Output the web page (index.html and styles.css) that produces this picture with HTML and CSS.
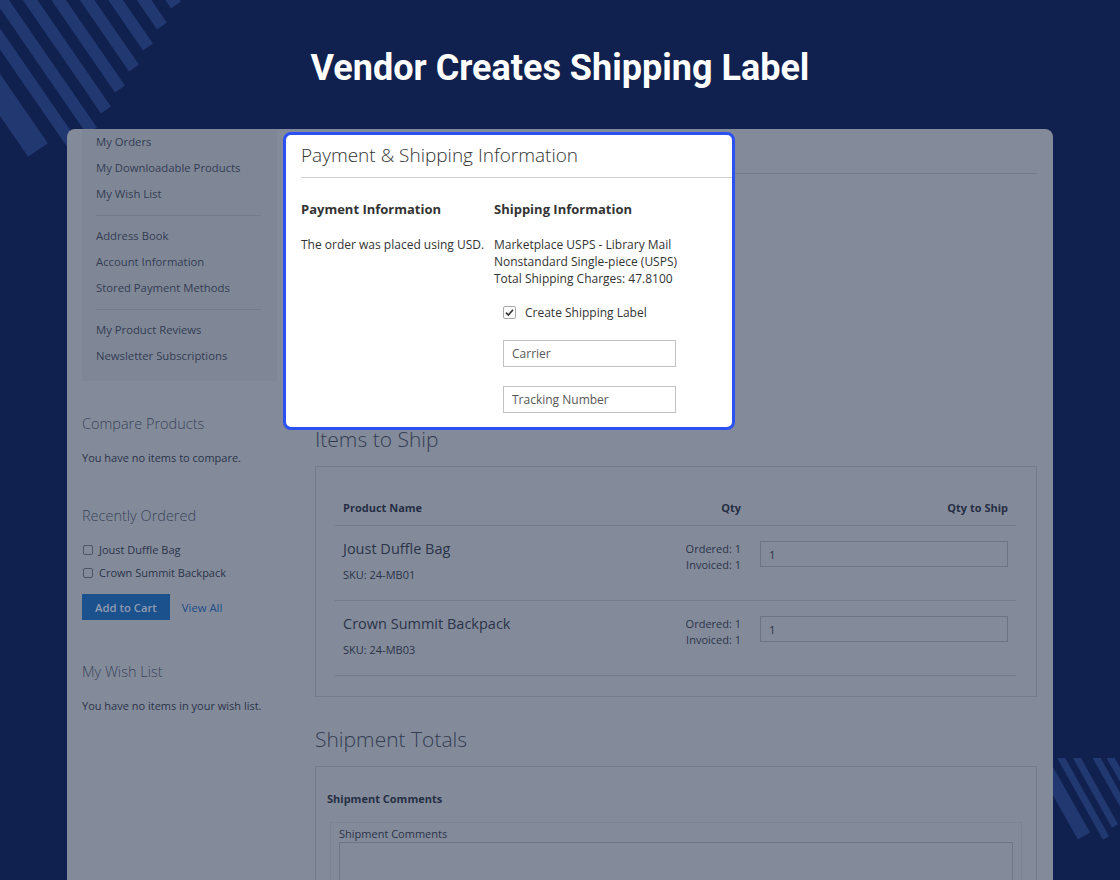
FILE: index.html
```html
<!DOCTYPE html>
<html lang="en">
  <head>
    <meta charset="UTF-8" />
    <meta name="viewport" content="width=device-width, initial-scale=1.0" />
    <title>Vendor Creates Shipping Label</title>
    <link rel="stylesheet" href="styles.css">
  </head>
  <body>
    <div class="page">
      <!-- corner decorations -->
      <svg class="stripes stripes-tl" width="200" height="180" viewBox="0 0 200 180">
        <g stroke="#213870" stroke-width="12">
          <line x1="76" y1="-140" x2="176" y2="5" />
          <line x1="62" y1="-119" x2="162" y2="26" />
          <line x1="48" y1="-98" x2="148" y2="47" />
          <line x1="34" y1="-77" x2="134" y2="68" />
          <line x1="20" y1="-56" x2="120" y2="89" />
          <line x1="6" y1="-35" x2="106" y2="110" />
          <line x1="-8" y1="-14" x2="92" y2="131" />
          <line x1="-22" y1="7" x2="78" y2="152" />
          <line x1="-62" y1="5" x2="38" y2="150" stroke-width="24" />
        </g>
      </svg>
      <svg class="stripes stripes-br" width="80" height="90" viewBox="0 0 80 90">
        <g stroke="#213870">
          <line x1="-12" y1="-21" x2="44" y2="78" stroke-width="14" />
          <line x1="10" y1="-20" x2="66" y2="80" stroke-width="7" />
          <line x1="19" y1="-32" x2="75" y2="68" stroke-width="7" />
          <line x1="0" y1="-100" x2="86" y2="52" stroke-width="7" />
          <line x1="14" y1="-100" x2="100" y2="52" stroke-width="7" />
        </g>
      </svg>

      <h1 class="hero-title">Vendor Creates Shipping Label</h1>

      <div class="screen">
        <div class="screen-body">
          <aside class="sidebar">
            <ul class="account-nav">
              <li><a>My Orders</a></li>
              <li><a>My Downloadable Products</a></li>
              <li><a>My Wish List</a></li>
              <li class="sep"></li>
              <li><a>Address Book</a></li>
              <li><a>Account Information</a></li>
              <li><a>Stored Payment Methods</a></li>
              <li class="sep"></li>
              <li><a>My Product Reviews</a></li>
              <li><a>Newsletter Subscriptions</a></li>
            </ul>

            <div class="side-block">
              <div class="side-title">Compare Products</div>
              <p class="side-text">You have no items to compare.</p>
            </div>

            <div class="side-block side-block-wide">
              <div class="side-title">Recently Ordered</div>
              <ul class="ordered-list">
                <li><span class="mini-check"></span>Joust Duffle Bag</li>
                <li><span class="mini-check"></span>Crown Summit Backpack</li>
              </ul>
              <div class="side-actions">
                <button class="btn-primary">Add to Cart</button>
                <a class="link">View All</a>
              </div>
            </div>

            <div class="side-block side-block-wish">
              <div class="side-title">My Wish List</div>
              <p class="side-text">You have no items in your wish list.</p>
            </div>
          </aside>

          <main class="main">
            <div class="main-top-title"></div>
            <div class="order-info"></div>

            <h2 class="section-title">Items to Ship</h2>
            <div class="panel">
              <table class="items">
                <thead>
                  <tr>
                    <th>Product Name</th>
                    <th class="col-qty">Qty</th>
                    <th class="col-ship">Qty to Ship</th>
                  </tr>
                </thead>
                <tbody>
                  <tr>
                    <td>
                      <div class="product-name">Joust Duffle Bag</div>
                      <div class="sku">SKU: 24-MB01</div>
                    </td>
                    <td class="col-qty">
                      <div>Ordered: 1</div>
                      <div>Invoiced: 1</div>
                    </td>
                    <td class="col-ship"><input class="qty-input" type="text" value="1" /></td>
                  </tr>
                  <tr>
                    <td>
                      <div class="product-name">Crown Summit Backpack</div>
                      <div class="sku">SKU: 24-MB03</div>
                    </td>
                    <td class="col-qty">
                      <div>Ordered: 1</div>
                      <div>Invoiced: 1</div>
                    </td>
                    <td class="col-ship"><input class="qty-input" type="text" value="1" /></td>
                  </tr>
                </tbody>
              </table>
            </div>

            <h2 class="section-title totals-title">Shipment Totals</h2>
            <div class="panel panel-totals">
              <div class="panel-label">Shipment Comments</div>
              <div class="comment-field">
                <label>Shipment Comments</label>
                <textarea></textarea>
              </div>
            </div>
          </main>
        </div>

        <!-- highlighted block shown over the dimmed page -->
        <div class="spotlight">
          <div class="spotlight-title">Payment &amp; Shipping Information</div>
          <div class="spotlight-cols">
            <div>
              <h4>Payment Information</h4>
              <p>The order was placed using USD.</p>
            </div>
            <div>
              <h4>Shipping Information</h4>
              <p>Marketplace USPS - Library Mail<br />Nonstandard Single-piece (USPS)<br />Total Shipping Charges: 47.8100</p>
              <label class="check-row">
                <span class="check-box">
                  <svg width="11" height="11" viewBox="0 0 11 11"><path d="M2 5.6 L4.4 8 L9 2.8" fill="none" stroke="#333" stroke-width="1.6" /></svg>
                </span>
                Create Shipping Label
              </label>
              <input class="field" type="text" placeholder="Carrier" />
              <input class="field field-last" type="text" placeholder="Tracking Number" />
            </div>
          </div>
        </div>
      </div>
    </div>
  </body>
</html>
```

FILE: styles.css
```css
body {
  margin: 0;
  background-color: #11214f;
  font-family: "Open Sans", Arial, sans-serif;
  overflow: hidden;
}
.page {
  position: relative;
  height: 880px;
  overflow: hidden;
}
.stripes {
  position: absolute;
  display: block;
}
.stripes-tl {
  left: 0;
  top: 0;
}
.stripes-br {
  left: 1040px;
  top: 758px;
}
.hero-title {
  margin: 0;
  padding-top: 48px;
  font-family: Roboto, sans-serif;
  font-weight: 700;
  font-size: 36px;
  line-height: 41px;
  color: #fff;
  text-align: center;
}

/* dimmed storefront */
.screen {
  position: relative;
  margin: 40px 67px 0;
  height: 751px;
  background-color: #838b9b;
  border-radius: 8px 8px 0 0;
  overflow: hidden;
  color: #2b3348;
}
.screen-body {
  display: grid;
  grid-template-columns: 195px 1fr;
  column-gap: 38px;
  padding: 0 16px 0 15px;
}
.account-nav {
  list-style: none;
  margin: 0;
  padding: 0 0 12px;
  background-color: #7f8797;
}
.account-nav a {
  display: block;
  padding-left: 14px;
  line-height: 26px;
  font-size: 11.3px;
  color: #343c52;
}
.account-nav .sep {
  height: 1px;
  background-color: #737b8d;
  margin: 8px 16px 7px 14px;
}
.side-block {
  margin-top: 33px;
}
.side-block-wide {
  margin-top: 40px;
}
.side-block-wish {
  margin-top: 42px;
}
.side-title {
  font-size: 14.5px;
  font-weight: 300;
  line-height: 20px;
  color: #3b4359;
}
.side-text {
  margin: 16px 0 0;
  font-size: 11px;
  line-height: 16px;
  color: #2b3348;
}
.ordered-list {
  list-style: none;
  margin: 12px 0 0;
  padding: 0;
}
.ordered-list li {
  display: flex;
  align-items: center;
  gap: 6px;
  height: 23px;
  font-size: 11px;
  color: #2b3348;
}
.mini-check {
  width: 8px;
  height: 8px;
  margin-left: 1px;
  border: 1px solid #4d5569;
  border-radius: 2px;
}
.side-actions {
  display: flex;
  align-items: center;
  gap: 12px;
  margin-top: 10px;
}
.btn-primary {
  height: 26px;
  padding: 0 13px;
  border: none;
  background-color: #1b518d;
  color: #929cb0;
  font-family: "Open Sans", Arial, sans-serif;
  font-size: 11.3px;
  font-weight: 600;
}
.link {
  font-size: 11.3px;
  color: #1d4c87;
}

.main-top-title {
  height: 45px;
  box-sizing: border-box;
  border-bottom: 1px solid #737b8c;
}
.order-info {
  height: 251px;
}
.section-title {
  margin: 0;
  font-size: 21px;
  font-weight: 300;
  line-height: 28px;
  color: #343c52;
}
.totals-title {
  margin-top: 28px;
}
.panel {
  margin-top: 13px;
  padding: 20px 20px 20px 19px;
  border: 1px solid #737b8d;
}
.items {
  width: 100%;
  border-collapse: collapse;
  font-size: 11px;
}
.items th {
  padding: 12px 8px 8px;
  line-height: 18px;
  font-weight: 700;
  text-align: left;
  color: #262e44;
  border-bottom: 1px solid #737b8d;
}
.items td {
  vertical-align: top;
  padding: 13px 8px 17px;
  border-bottom: 1px solid #737b8d;
}
.items .col-qty {
  width: 110px;
  text-align: right;
}
.items td.col-qty {
  padding-top: 15px;
  line-height: 16px;
  font-size: 11px;
}
.items .col-ship {
  width: 248px;
  text-align: right;
}
.items td.col-ship {
  padding: 15px 8px 0 11px;
}
.product-name {
  font-size: 14.5px;
  line-height: 20px;
  color: #2b3348;
}
.sku {
  margin-top: 8px;
  font-size: 11px;
  line-height: 16px;
}
.qty-input {
  display: block;
  width: 100%;
  height: 26px;
  box-sizing: border-box;
  padding: 0 8px;
  border: 1px solid #6c7488;
  background: transparent;
  font-family: "Open Sans", Arial, sans-serif;
  font-size: 11.5px;
  color: #2b3348;
}
.panel-totals {
  padding: 24px 14px 0 11px;
  height: 120px;
}
.panel-label {
  font-size: 11px;
  font-weight: 700;
  line-height: 16px;
  color: #262e44;
}
.comment-field {
  margin: 15px 0 0 3px;
  padding: 4px 8px 0;
  border: 1px solid #7a8395;
  height: 100px;
}
.comment-field label {
  display: block;
  font-size: 11px;
  line-height: 14px;
}
.comment-field textarea {
  display: block;
  width: 100%;
  height: 60px;
  box-sizing: border-box;
  margin-top: 1px;
  border: 1px solid #6d7588;
  background: transparent;
  resize: none;
}

/* popup over the page */
.spotlight {
  position: absolute;
  left: 216px;
  top: 3px;
  width: 452px;
  box-sizing: border-box;
  padding-bottom: 14px;
  background-color: #fff;
  border: 3px solid #2c51f2;
  border-radius: 8px;
  color: #333;
}
.spotlight-title {
  margin-left: 15px;
  padding: 7px 0 9px;
  font-size: 19px;
  font-weight: 300;
  line-height: 26px;
  border-bottom: 1px solid #d1d1d1;
}
.spotlight-cols {
  display: grid;
  grid-template-columns: 193px 1fr;
  padding: 22px 15px 0;
}
.spotlight h4 {
  margin: 0;
  font-size: 13px;
  font-weight: 700;
  line-height: 18px;
}
.spotlight p {
  margin: 18px 0 0;
  font-size: 12px;
  line-height: 17px;
}
.check-row {
  display: flex;
  align-items: center;
  gap: 9px;
  height: 20px;
  margin: 15px 0 0 9px;
  font-size: 12px;
}
.check-box {
  display: flex;
  align-items: center;
  justify-content: center;
  width: 11px;
  height: 11px;
  border: 1px solid #a9a9a9;
  border-radius: 2px;
}
.field {
  display: block;
  width: 173px;
  height: 27px;
  box-sizing: border-box;
  margin: 18px 0 0 9px;
  padding: 0 8px;
  border: 1px solid #c2c2c2;
  font-family: "Open Sans", Arial, sans-serif;
  font-size: 12px;
}
.field::placeholder {
  color: #575757;
}
.field-last {
  margin-top: 19px;
}
```
